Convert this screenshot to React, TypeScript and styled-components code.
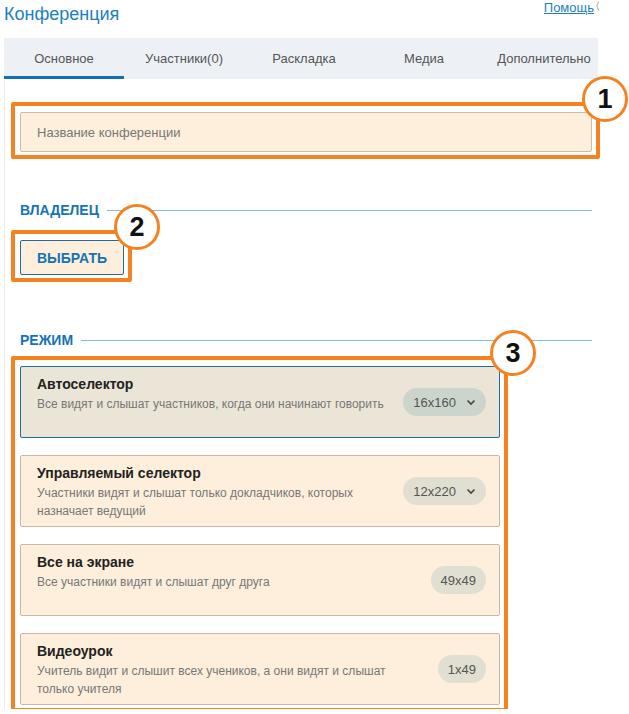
import React from 'react';
import styled, { createGlobalStyle } from 'styled-components';

const GlobalStyle = createGlobalStyle`
	body {
		margin: 0;
		background: #fff;
		font-family: "Liberation Sans", Arial, sans-serif;
	}
`

const Page = styled.div`
	width: 594px;
	margin-left: 4px;
`

const Header = styled.div`
	display: flex;
	justify-content: space-between;
	align-items: flex-start;
	height: 38px;
`

const Title = styled.h1`
	margin: 3px 0 0 0;
	font-size: 18px;
	font-weight: normal;
	line-height: 22px;
	color: #1b7fc1;
`

const HelpLink = styled.a`
	display: flex;
	align-items: center;
	gap: 2px;
	margin-right: -1px;
	font-size: 13px;
	line-height: 15px;
	color: #1b7fc1;
	text-decoration: underline;
	overflow: hidden;
`

const HelpIcon = styled.span`
	display: block;
	width: 3px;
	overflow: hidden;
`

const Tabs = styled.div`
	display: grid;
	grid-template-columns: repeat(5, 120px);
	height: 41px;
	background: #edf1f5;
	overflow: hidden;
`

const Tab = styled.div<{ $active?: boolean }>`
	display: flex;
	align-items: center;
	justify-content: center;
	padding-top: 2px;
	font-size: 13px;
	color: #555;
	white-space: nowrap;
	border-bottom: 3px solid ${props => props.$active ? '#1470b5' : 'transparent'};
`

const Panel = styled.div`
	border-left: 1px solid #ebebeb;
	padding: 33px 6px 4px 15px;
`

const Marked = styled.div<{ $inline?: boolean }>`
	position: relative;
	width: ${props => props.$inline ? 'fit-content' : 'auto'};

	&::before {
		content: '';
		position: absolute;
		inset: -10px -8px -7px -9px;
		border: 4px solid #f58220;
		border-radius: 2px;
		pointer-events: none;
	}
`

const Badge = styled.div`
	position: absolute;
	top: -36px;
	right: -36px;
	width: 40px;
	height: 40px;
	border: 3px solid #f58220;
	border-radius: 50%;
	background: #fff;
	display: flex;
	align-items: center;
	justify-content: center;
	font-size: 27px;
	font-weight: bold;
	color: #111;
	z-index: 2;
`

const NameInput = styled.input`
	display: block;
	box-sizing: border-box;
	width: 100%;
	height: 40px;
	padding: 0 16px;
	background: #fdefdc;
	border: 1px solid #cbbcab;
	border-radius: 2px;
	font-family: inherit;
	font-size: 13px;
	color: #333;
	outline: none;

	&::placeholder {
		color: #777;
	}
`

const Section = styled.div<{ $gap: number; $after: number }>`
	display: flex;
	align-items: center;
	gap: 8px;
	height: 20px;
	margin-top: ${props => props.$gap}px;
	margin-bottom: ${props => props.$after}px;
	font-size: 14px;
	font-weight: bold;
	color: #1673b3;

	&::after {
		content: '';
		flex: 1;
		height: 1px;
		background: #7ebfe3;
	}
`

const ChooseButton = styled.button`
	display: block;
	width: 104px;
	height: 35px;
	background: #fdefdc;
	border: 1px solid #1c6d9a;
	border-radius: 2px;
	font-family: inherit;
	font-size: 14px;
	font-weight: bold;
	color: #1673b3;
`

const ModeList = styled.div`
	display: flex;
	flex-direction: column;
	gap: 17px;
	width: 480px;
`

const ModeCard = styled.div<{ $selected?: boolean }>`
	box-sizing: border-box;
	display: flex;
	align-items: center;
	justify-content: space-between;
	height: 72px;
	padding: 0 13px 0 16px;
	background: ${props => props.$selected ? '#ebe5d8' : '#fdefdc'};
	border: 1px solid ${props => props.$selected ? '#1b6d9c' : '#c9b8a5'};
	border-radius: 2px;
`

const ModeText = styled.div`
	align-self: flex-start;
	max-width: 360px;
	padding-top: 8px;
`

const ModeTitle = styled.div`
	font-size: 14px;
	font-weight: bold;
	line-height: 18px;
	color: #222;
`

const ModeDesc = styled.div`
	margin-top: 2px;
	font-size: 12px;
	line-height: 18px;
	color: #777;
`

const Pill = styled.div<{ $selected?: boolean }>`
	display: flex;
	align-items: center;
	gap: 10px;
	height: 28px;
	padding: 0 10px;
	border-radius: 14px;
	background: ${props => props.$selected ? '#ccd5cb' : '#e0dfd2'};
	font-size: 13px;
	color: #555;
`

const Chevron = () => (
	<svg width="10" height="8" viewBox="0 0 10 8">
		<path d="M1.5 2.5 L5 6 L8.5 2.5" fill="none" stroke="#444" strokeWidth="1.6" />
	</svg>
)

const modes = [
	{ title: 'Автоселектор', desc: 'Все видят и слышат участников, когда они начинают говорить', size: '16x160', menu: true },
	{ title: 'Управляемый селектор', desc: 'Участники видят и слышат только докладчиков, которых назначает ведущий', size: '12x220', menu: true },
	{ title: 'Все на экране', desc: 'Все участники видят и слышат друг друга', size: '49x49', menu: false },
	{ title: 'Видеоурок', desc: 'Учитель видит и слышит всех учеников, а они видят и слышат только учителя', size: '1x49', menu: false },
]

const tabs = ['Основное', 'Участники(0)', 'Раскладка', 'Медиа', 'Дополнительно']

export default function App() {
	return (
		<Page>
			<GlobalStyle />
			<Header>
				<Title>Конференция</Title>
				<HelpLink href="#">
					Помощь
					<HelpIcon>
						<svg width="12" height="12" viewBox="0 0 12 12">
							<circle cx="6" cy="6" r="5" fill="none" stroke="#bbb" strokeWidth="1.2" />
						</svg>
					</HelpIcon>
				</HelpLink>
			</Header>

			<Tabs>
				{tabs.map((t, i) => <Tab key={t} $active={i === 0}>{t}</Tab>)}
			</Tabs>

			<Panel>
				<Marked>
					<NameInput placeholder="Название конференции" />
					<Badge>1</Badge>
				</Marked>

				<Section $gap={48} $after={20}>ВЛАДЕЛЕЦ</Section>
				<Marked $inline>
					<ChooseButton type="button">ВЫБРАТЬ</ChooseButton>
					<Badge>2</Badge>
				</Marked>

				<Section $gap={55} $after={16}>РЕЖИМ</Section>
				<Marked $inline>
					<ModeList>
						{modes.map((m, i) => (
							<ModeCard key={m.title} $selected={i === 0}>
								<ModeText>
									<ModeTitle>{m.title}</ModeTitle>
									<ModeDesc>{m.desc}</ModeDesc>
								</ModeText>
								<Pill $selected={i === 0}>
									{m.size}
									{m.menu && <Chevron />}
								</Pill>
							</ModeCard>
						))}
					</ModeList>
					<Badge>3</Badge>
				</Marked>
			</Panel>
		</Page>
	)
}
